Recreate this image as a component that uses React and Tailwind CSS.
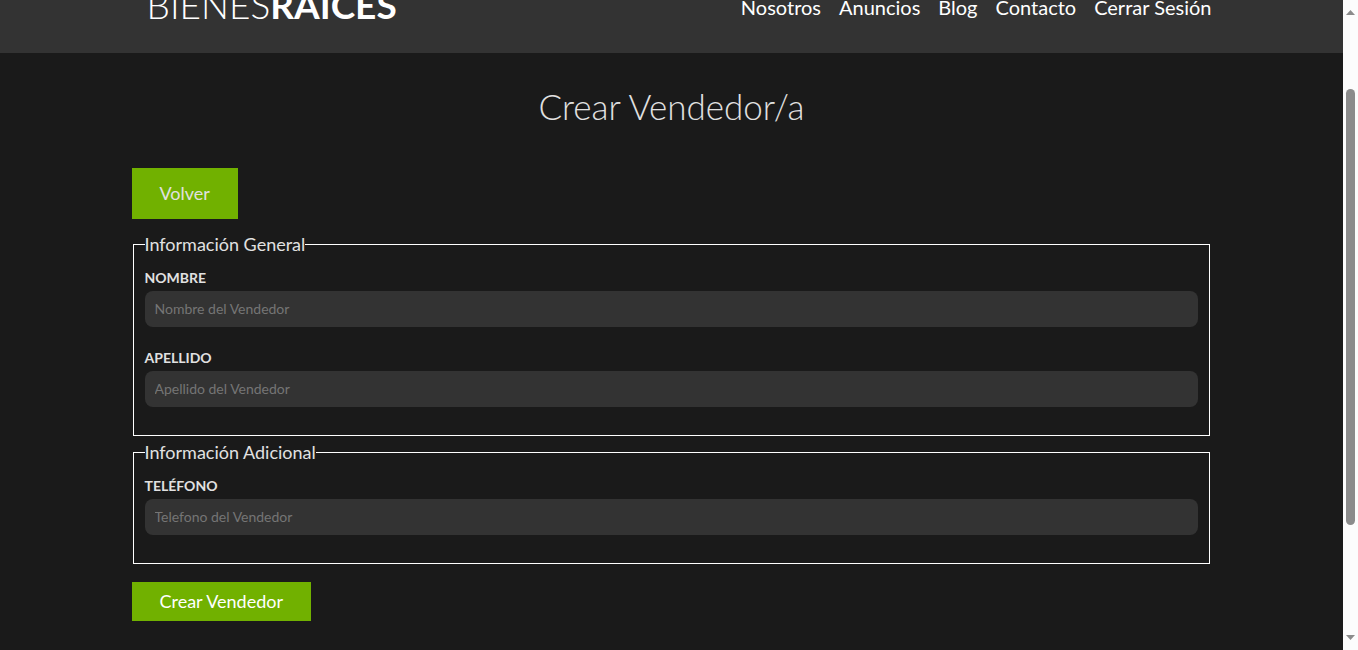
import React from "react";

const links = ["Nosotros", "Anuncios", "Blog", "Contacto", "Cerrar Sesión"];

function Header() {
  return (
    <header className="flex h-[53px] flex-col justify-end overflow-hidden bg-[#333333] text-white">
      <div className="mx-auto flex w-full max-w-[1080px] shrink-0 items-end justify-between pb-7 pl-[15px]">
        <a href="#inicio" className="text-[37px] leading-10 font-light">
          BIENES<span className="font-bold">RAÍCES</span>
        </a>
        <nav className="flex gap-[18px] pb-[3px] text-xl leading-[30px]">
          {links.map((text) => (
            <a key={text} href="#seccion">{text}</a>
          ))}
        </nav>
      </div>
    </header>
  );
}

function Field({ id, label, placeholder, type = "text" }) {
  return (
    <div className="mb-5">
      <label htmlFor={id} className="mb-[3px] block text-sm leading-[21px] font-bold uppercase">
        {label}
      </label>
      <input
        id={id}
        type={type}
        placeholder={placeholder}
        className="block h-9 w-full rounded-lg bg-[#333333] px-2.5 pb-0.5 text-sm placeholder:text-[#757575]"
      />
    </div>
  );
}

function Group({ title, children }) {
  return (
    <fieldset className="mr-0.5 mb-[3px] ml-px border border-white px-[11px] pt-2.5 pb-2">
      <legend className="text-lg leading-[26px]">{title}</legend>
      {children}
    </fieldset>
  );
}

function ScrollTrack() {
  return (
    <div aria-hidden="true" className="flex w-[15px] shrink-0 flex-col items-center bg-[#fcfcfc] py-2.5">
      <svg width="9" height="5" viewBox="0 0 9 5" fill="#8b8b8b"><path d="M4.5 0 9 5H0Z" /></svg>
      <div className="flex w-full grow flex-col items-center pt-[74px] pb-[110px]">
        <div className="w-[9px] grow rounded-full bg-[#8b8b8b]" />
      </div>
      <svg width="9" height="5" viewBox="0 0 9 5" fill="#8b8b8b"><path d="M0 0H9L4.5 5Z" /></svg>
    </div>
  );
}

export default function App() {
  return (
    <div className="flex min-h-screen bg-[#1a1a1a] font-['Lato',sans-serif] text-[#e1e1e1]">
      <div className="min-w-0 grow">
        <Header />
        <main className="mx-auto max-w-[1080px] pt-[26px]">
          <h1 className="text-center text-[35px] leading-[54px] font-light">Crear Vendedor/a</h1>
          <a href="#volver" className="mt-[35px] mb-3 block w-fit bg-[#71b100] px-7 py-3 text-lg leading-[27px]">
            Volver
          </a>
          <form>
            <Group title="Información General">
              <Field id="nombre" label="Nombre" placeholder="Nombre del Vendedor" />
              <Field id="apellido" label="Apellido" placeholder="Apellido del Vendedor" />
            </Group>
            <Group title="Información Adicional">
              <Field id="telefono" label="Teléfono" placeholder="Telefono del Vendedor" type="tel" />
            </Group>
            <button type="submit" className="mt-[15px] bg-[#71b100] px-7 py-1.5 text-lg leading-[27px] text-white">
              Crear Vendedor
            </button>
          </form>
        </main>
      </div>
      <ScrollTrack />
    </div>
  );
}
